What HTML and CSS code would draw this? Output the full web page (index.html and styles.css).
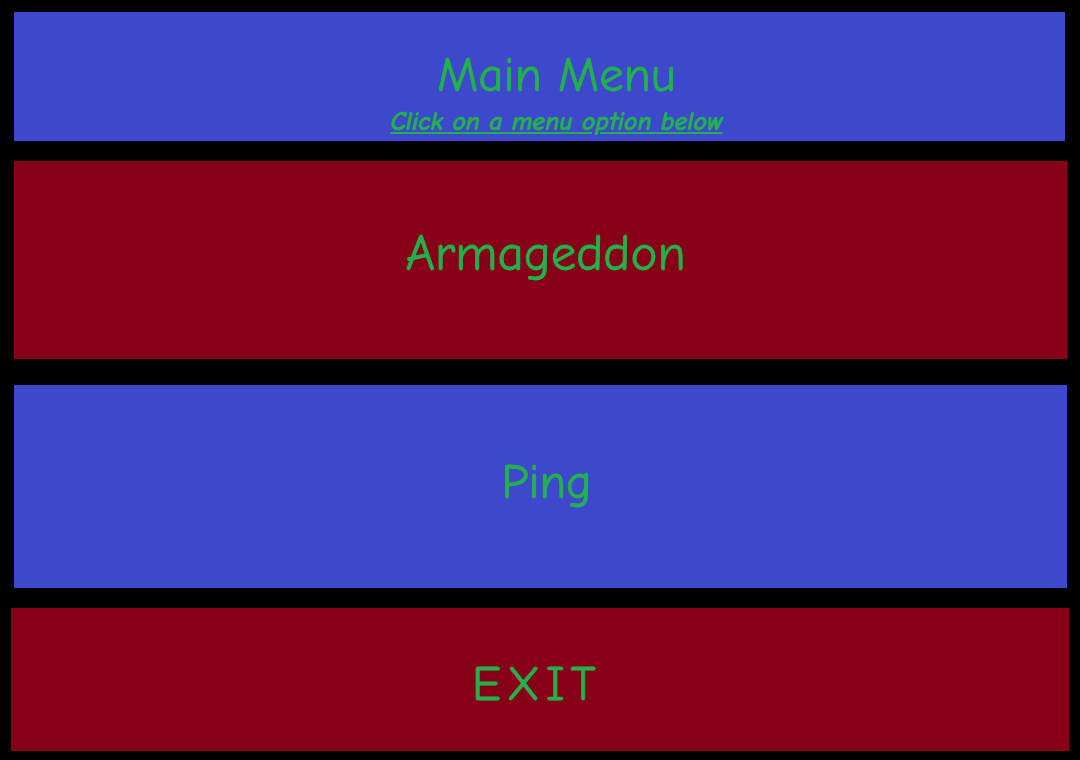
FILE: index.html
```html
<!DOCTYPE html>
<html>
<head>
<meta charset="utf-8">
<title>Main Menu</title>
<link rel="stylesheet" href="styles.css">
</head>
<body>
<div class="screen">
  <header class="panel header">
    <h1 class="title">Main Menu</h1>
    <p class="subtitle">Click on a menu option below</p>
  </header>
  <div class="panel option armageddon"><span class="label">Armageddon</span></div>
  <div class="panel option ping"><span class="label">Ping</span></div>
  <div class="panel option exit"><span class="label">EXIT</span></div>
</div>
</body>
</html>
```
FILE: styles.css
```css
html, body {
  margin: 0;
  padding: 0;
  background: #000;
  width: 1080px;
  height: 760px;
  overflow: hidden;
}
.screen {
  display: flex;
  flex-direction: column;
  padding-top: 12px;
  font-family: "Comic Sans MS", "Comic Neue", "Open Sans", sans-serif;
  color: #22b14c;
}
.panel {
  display: flex;
  flex-direction: column;
  align-items: center;
  justify-content: center;
  box-sizing: border-box;
}
.header {
  background: #3e48cc;
  height: 129px;
  margin: 0 15px 0 14px;
  padding: 37px 0 0 34px;
  justify-content: flex-start;
}
.title {
  margin: 0;
  font-weight: normal;
  font-size: 49px;
  line-height: 52px;
  -webkit-text-stroke: 0.8px currentColor;
}
.subtitle {
  margin: 6px 0 0 0;
  font-size: 26px;
  line-height: 30px;
  font-weight: bold;
  font-style: italic;
  text-decoration: underline;
  -webkit-text-stroke: 0.5px currentColor;
}
.option {
  background: #870018;
}
.armageddon {
  height: 198px;
  margin: 20px 13px 0 14px;
  padding: 0 0 12px 10px;
}
.armageddon .label {
  font-size: 51px;
}
.ping {
  background: #3e48cc;
  height: 203px;
  margin: 26px 13px 0 14px;
  padding: 0 0 8px 12px;
}
.exit {
  height: 143px;
  margin: 20px 11px 0 11px;
  padding: 10px 12px 0 0;
}
.exit .label {
  letter-spacing: 6px;
  margin-right: -6px;
}
.label {
  font-size: 48px;
  line-height: 60px;
  -webkit-text-stroke: 0.8px currentColor;
}
```
